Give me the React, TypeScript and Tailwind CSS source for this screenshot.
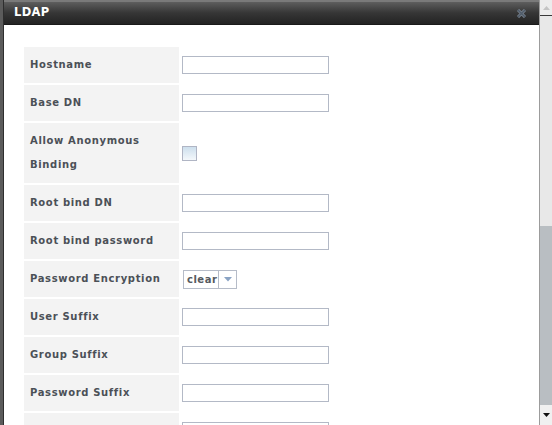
const fields = [
  { label: "Hostname", kind: "text" },
  { label: "Base DN", kind: "text" },
  { label: "Allow Anonymous Binding", kind: "check" },
  { label: "Root bind DN", kind: "text" },
  { label: "Root bind password", kind: "text" },
  { label: "Password Encryption", kind: "select" },
  { label: "User Suffix", kind: "text" },
  { label: "Group Suffix", kind: "text" },
  { label: "Password Suffix", kind: "text" },
  // next row is only partly in view, its label falls below the fold
  { label: "\u00a0", kind: "text" },
];

const Field = ({ kind }: { kind: string }) => {
  if (kind === "check") {
    return (
      <div className="h-[15px] w-[15px] border border-[#b0b5c4] bg-gradient-to-b from-[#cddfed] to-[#f4f8fb]" />
    );
  }
  if (kind === "select") {
    return (
      <div className="ml-px flex h-[19px] w-[54px] items-stretch border border-[#b6bcc8] bg-white">
        <span className="flex w-[34px] items-center pl-[3px] text-[10px] font-bold tracking-[0.5px] text-[#555a60]">
          clear
        </span>
        <span className="flex flex-1 items-center justify-center border-l border-[#b6bcc8]">
          <svg width="8" height="5" viewBox="0 0 8 5">
            <path d="M0 0h8L4 4.5z" fill="#8aa3c4" />
          </svg>
        </span>
      </div>
    );
  }
  return <div className="h-[18px] w-[147px] border border-[#b3b9c6] bg-white" />;
};

export default function App() {
  return (
    <div className="flex h-[425px] w-[552px] overflow-hidden bg-white font-['DejaVu_Sans',sans-serif]">
      {/* window edge */}
      <div className="w-[4px] shrink-0 border-r border-[#2e2e2e] bg-[#5b5b5b]" />

      <div className="flex min-w-0 flex-1 flex-col">
        {/* Title bar */}
        <div className="flex h-[25px] shrink-0 items-center justify-between border-t-2 border-b border-t-[#7a7a7a] border-b-[#1a1a1a] bg-gradient-to-b from-[#5e5e5e] via-[#363636] to-[#232323] pl-[10px] pr-[13px]">
          <span className="text-[11.5px] font-bold tracking-[0.3px] text-white">LDAP</span>
          <svg width="9" height="9" viewBox="0 0 9 9">
            <path d="M1 1l7 7M8 1L1 8" stroke="#7d8894" strokeWidth="3" />
            <path d="M1 1l7 7M8 1L1 8" stroke="#4f5b69" strokeWidth="1.6" />
          </svg>
        </div>

        {/* Form */}
        <div className="flex flex-col gap-[2px] pl-[20px] pt-[22px]">
          {fields.map((f, i) => (
            <div key={i} className="flex">
              <div className="w-[155px] shrink-0 bg-[#f3f3f3] p-[6px] text-[10px] font-bold leading-[24px] tracking-[0.65px] text-[#4b5057]">
                {f.label}
              </div>
              <div className="flex items-center pl-[3px]">
                <Field kind={f.kind} />
              </div>
            </div>
          ))}
        </div>
      </div>

      {/* Scrollbar */}
      <div className="flex w-[13px] shrink-0 flex-col border-l border-[#9c9c9c] bg-[#b9bec2]">
        <div className="flex h-[16px] shrink-0 items-center justify-center border-b border-[#3a3a3a] bg-[#ececec]">
          <svg width="7" height="4" viewBox="0 0 7 4">
            <path d="M0 4h7L3.5 0z" fill="#c4c4c4" />
          </svg>
        </div>
        <div className="h-[210px] shrink-0 bg-[#e8e8e8]" />
        <div className="flex-1" />
        <div className="flex h-[20px] shrink-0 items-center justify-center bg-[#f0f0f0]">
          <svg width="7" height="4" viewBox="0 0 7 4">
            <path d="M0 0h7L3.5 4z" fill="#111" />
          </svg>
        </div>
      </div>
    </div>
  );
}
